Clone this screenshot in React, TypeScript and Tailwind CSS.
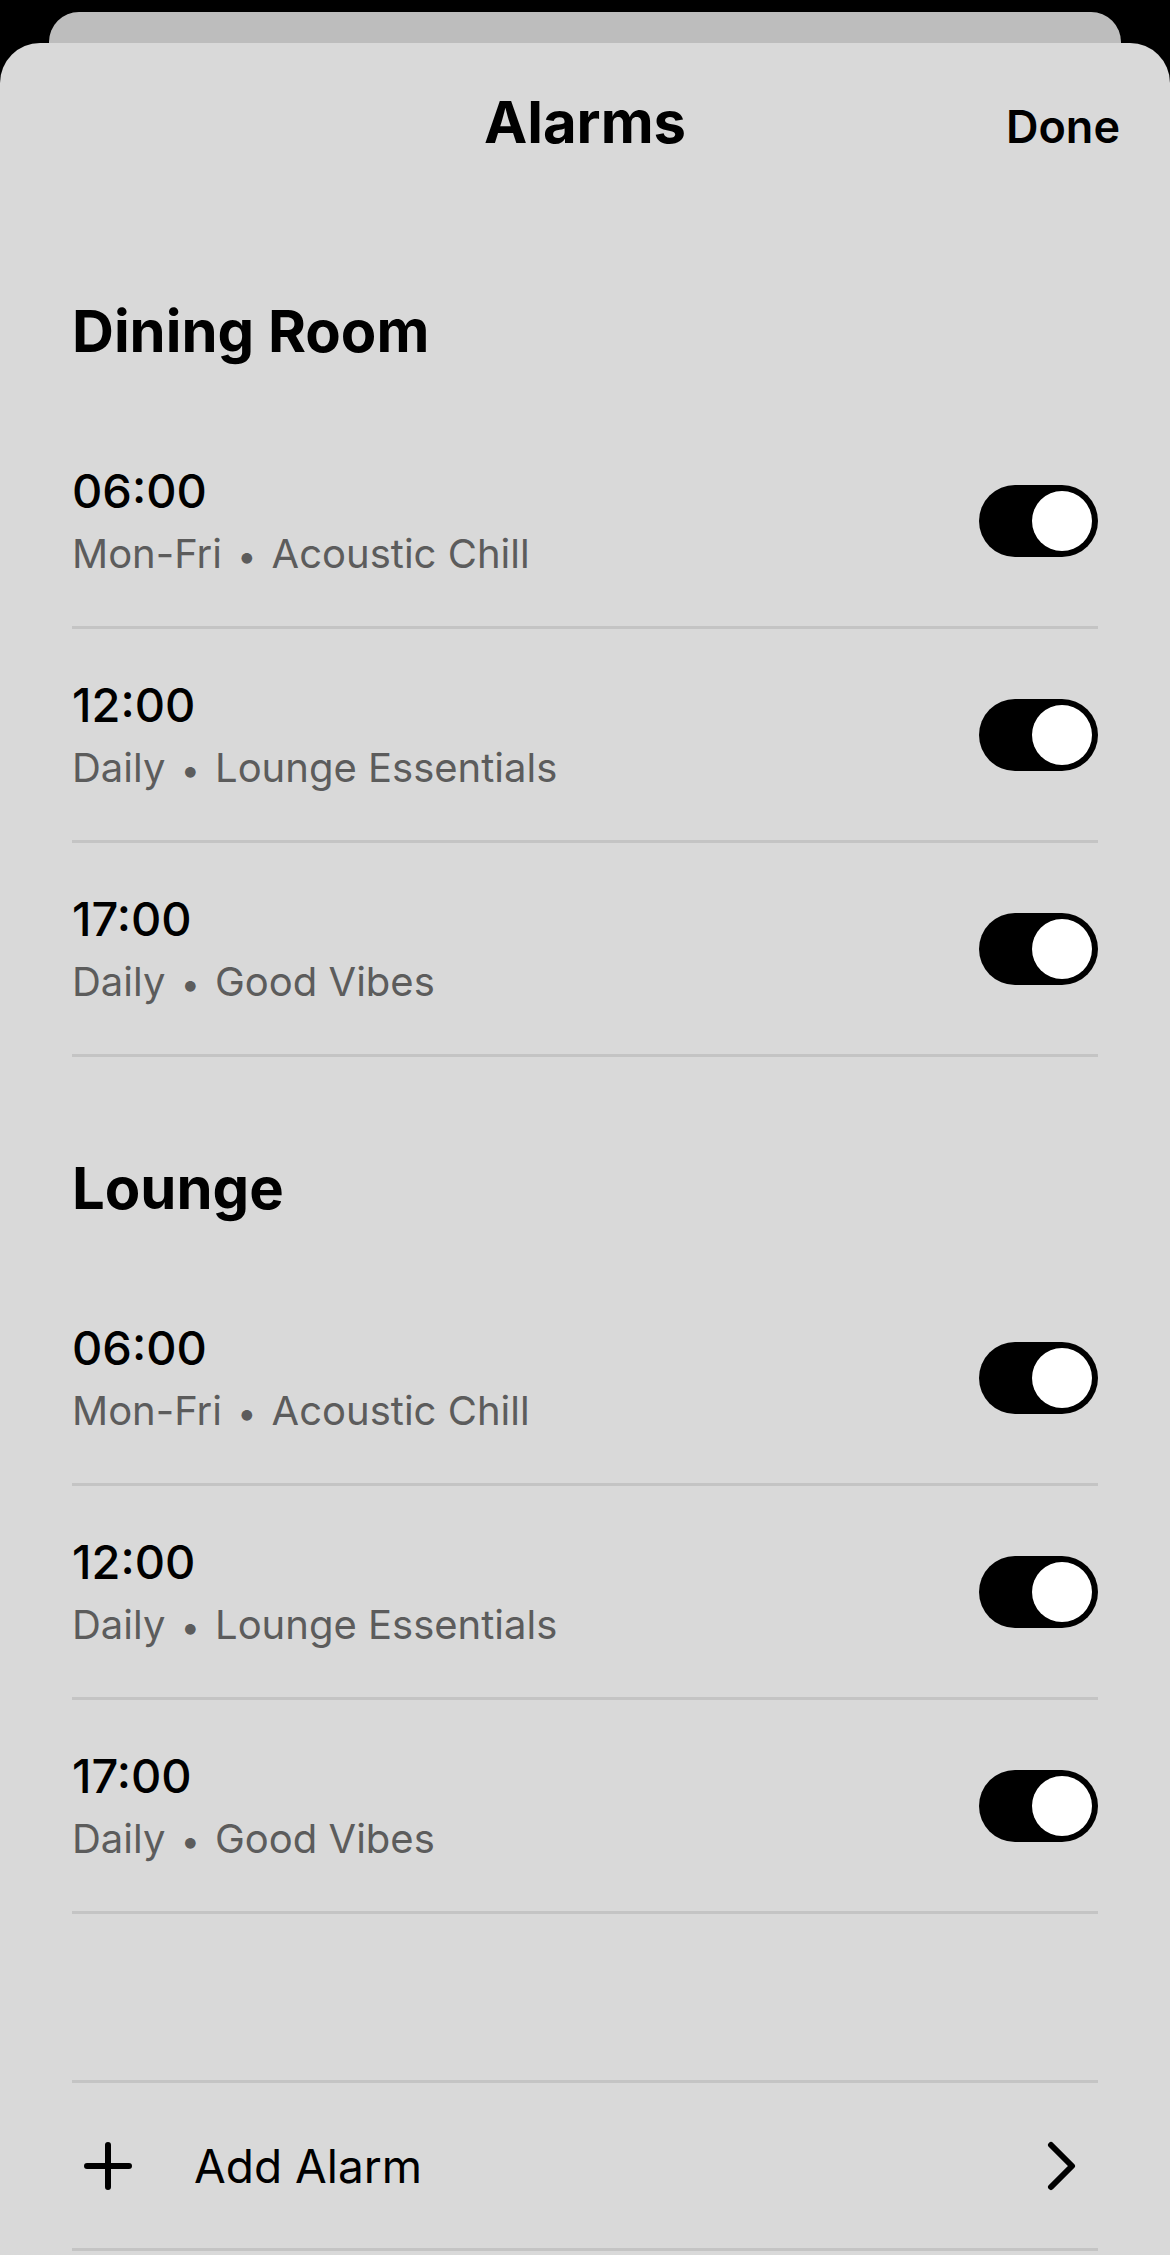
import { useState } from "react";

type Alarm = {
  time: string;
  days: string;
  playlist: string;
};

const rooms: { name: string; alarms: Alarm[] }[] = [
  {
    name: "Dining Room",
    alarms: [
      { time: "06:00", days: "Mon-Fri", playlist: "Acoustic Chill" },
      { time: "12:00", days: "Daily", playlist: "Lounge Essentials" },
      { time: "17:00", days: "Daily", playlist: "Good Vibes" },
    ],
  },
  {
    name: "Lounge",
    alarms: [
      { time: "06:00", days: "Mon-Fri", playlist: "Acoustic Chill" },
      { time: "12:00", days: "Daily", playlist: "Lounge Essentials" },
      { time: "17:00", days: "Daily", playlist: "Good Vibes" },
    ],
  },
];

const Toggle = ({ on, onClick }: { on: boolean; onClick: () => void }) => {
  return (
    <button
      onClick={onClick}
      className={`flex h-[72px] w-[119px] shrink-0 items-center rounded-full p-[6px] ${
        on ? "justify-end bg-black" : "justify-start bg-[#b5b5b5]"
      }`}
    >
      <span className="block h-[60px] w-[60px] rounded-full bg-white" />
    </button>
  );
};

const AlarmRow = ({ alarm }: { alarm: Alarm }) => {
  const [on, setOn] = useState(true);

  return (
    <div className="border-b-[3px] border-[#c4c4c4]">
      <div className="flex h-[211px] items-center justify-between">
        <div className="mt-[6px] flex flex-col">
          <span className="text-[47px] leading-[62px] font-medium text-black">
            {alarm.time}
          </span>
          <span className="text-[40px] leading-[63px] text-[#5c5c5c]">
            {alarm.days} <span className="mx-[4px] text-[34px]">•</span>{" "}
            {alarm.playlist}
          </span>
        </div>
        <Toggle on={on} onClick={() => setOn(!on)} />
      </div>
    </div>
  );
};

const App = () => {
  return (
    <div className="h-[2255px] w-[1170px] overflow-hidden bg-black font-['Inter',sans-serif]">
      <div className="mx-[49px] mt-[12px] h-[31px] rounded-t-[30px] bg-[#bdbdbd]" />
      <div className="h-[2212px] rounded-t-[40px] bg-[#d9d9d9]">
        <div className="grid h-[157px] grid-cols-[1fr_auto_1fr] items-baseline px-[50px] pt-[50px]">
          <div />
          <h1 className="text-[58px] leading-[58px] font-bold text-black">
            Alarms
          </h1>
          <div className="flex justify-end">
            <button className="text-[45px] leading-[45px] font-semibold text-black">
              Done
            </button>
          </div>
        </div>

        <div className="px-[72px]">
          {rooms.map((room) => (
            <section key={room.name}>
              <h2 className="h-[215px] pt-[102px] text-[58px] leading-[58px] font-bold text-black">
                {room.name}
              </h2>
              {room.alarms.map((alarm, index) => (
                <AlarmRow key={index} alarm={alarm} />
              ))}
            </section>
          ))}

          <div className="mt-[166px] border-y-[3px] border-[#c4c4c4]">
            <button className="flex h-[165px] w-full items-center">
              <svg
                width="48"
                height="48"
                viewBox="0 0 48 48"
                className="ml-[12px] shrink-0"
                fill="none"
                stroke="black"
                strokeWidth="6"
                strokeLinecap="round"
              >
                <path d="M24 3v42M3 24h42" />
              </svg>
              <span className="ml-[62px] text-[46px] leading-[46px] font-normal text-black">
                Add Alarm
              </span>
              <svg
                width="32"
                height="50"
                viewBox="0 0 32 50"
                className="mr-[20px] ml-auto shrink-0"
                fill="none"
                stroke="black"
                strokeWidth="6"
                strokeLinecap="round"
                strokeLinejoin="round"
              >
                <path d="M5 4l21 21L5 46" />
              </svg>
            </button>
          </div>
        </div>
      </div>
    </div>
  );
};

export default App;
